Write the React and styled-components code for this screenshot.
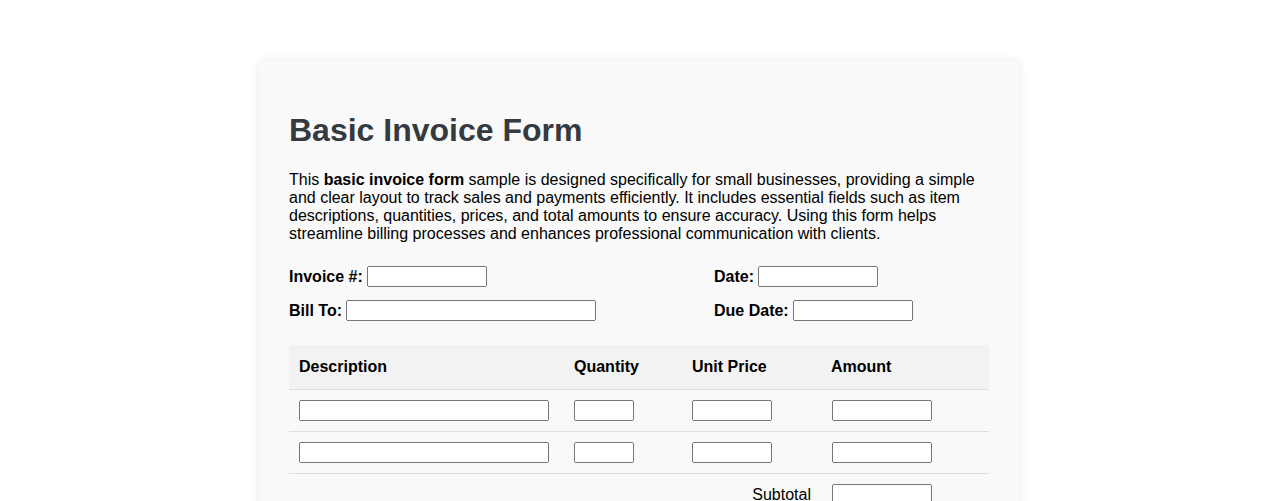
import React from 'react'
import styled, { createGlobalStyle } from 'styled-components'

const GlobalStyle = createGlobalStyle`
  body {
    margin: 0;
    background: #ffffff;
    font-family: "Liberation Sans", Arial, sans-serif;
    color: #000000;
  }
`

const Card = styled.div`
  width: 700px;
  margin: 61px auto 40px;
  padding: 30px;
  background: #f9f9f9;
  box-shadow: 0 0 10px rgba(0, 0, 0, 0.1);
  border-radius: 4px;
`

const Title = styled.h1`
  margin: 21px 0 22px;
  font-size: 32px;
  font-weight: bold;
  color: #343a40;
`

const Intro = styled.p`
  margin: 0;
  font-size: 16px;
  line-height: 18px;
`

const InfoGrid = styled.div`
  display: grid;
  grid-template-columns: 425px 1fr;
  row-gap: 13px;
  margin-top: 23px;
`

const Field = styled.div`
  display: flex;
  align-items: center;
  gap: 4px;
  font-size: 16px;
`

const Label = styled.label`
  font-weight: bold;
`

const Input = styled.input`
  box-sizing: border-box;
  width: ${(p) => p.$w || 120}px;
  height: 21px;
  margin: 0;
`

const CellInput = styled(Input)`
  display: block;
  margin-left: ${(p) => p.$shift || 0}px;
`

const Table = styled.table`
  width: 700px;
  margin-top: 24px;
  border-collapse: collapse;
  table-layout: fixed;
  font-size: 16px;
`

const Th = styled.th`
  width: ${(p) => p.$w}px;
  padding: 13px 10px;
  text-align: left;
  font-weight: bold;
  line-height: 18px;
  background: #f2f2f2;
  border-bottom: 1px solid #dddddd;
`

const Td = styled.td`
  padding: 10px;
  border-bottom: ${(p) => (p.$last ? 'none' : '1px solid #dddddd')};
  text-align: ${(p) => (p.$right ? 'right' : 'left')};
  vertical-align: middle;
`

const items = [1, 2]

export default function App() {
  return (
    <>
      <GlobalStyle />
      <Card>
        <Title>Basic Invoice Form</Title>
        <Intro>
          This <b>basic invoice form</b> sample is designed specifically for small businesses, providing a simple
          and clear layout to track sales and payments efficiently. It includes essential fields such as item
          descriptions, quantities, prices, and total amounts to ensure accuracy. Using this form helps
          streamline billing processes and enhances professional communication with clients.
        </Intro>

        <InfoGrid>
          <Field>
            <Label>Invoice #:</Label>
            <Input $w={120} />
          </Field>
          <Field>
            <Label>Date:</Label>
            <Input $w={120} />
          </Field>
          <Field>
            <Label>Bill To:</Label>
            <Input $w={250} />
          </Field>
          <Field>
            <Label>Due Date:</Label>
            <Input $w={120} />
          </Field>
        </InfoGrid>

        <Table>
          <thead>
            <tr>
              <Th $w={255}>Description</Th>
              <Th $w={98}>Quantity</Th>
              <Th $w={119}>Unit Price</Th>
              <Th $w={148}>Amount</Th>
            </tr>
          </thead>
          <tbody>
            {items.map((i) => (
              <tr key={i}>
                <Td><CellInput $w={250} /></Td>
                <Td><CellInput $w={60} /></Td>
                <Td><CellInput $w={80} /></Td>
                <Td><CellInput $w={100} $shift={1} /></Td>
              </tr>
            ))}
            <tr>
              <Td colSpan={3} $right>Subtotal</Td>
              <Td><CellInput $w={100} $shift={1} /></Td>
            </tr>
            <tr>
              <Td colSpan={3} $right>Tax</Td>
              <Td><CellInput $w={100} $shift={1} /></Td>
            </tr>
            <tr>
              <Td colSpan={3} $right $last><b>Total</b></Td>
              <Td $last><CellInput $w={100} $shift={1} /></Td>
            </tr>
          </tbody>
        </Table>
      </Card>
    </>
  )
}
